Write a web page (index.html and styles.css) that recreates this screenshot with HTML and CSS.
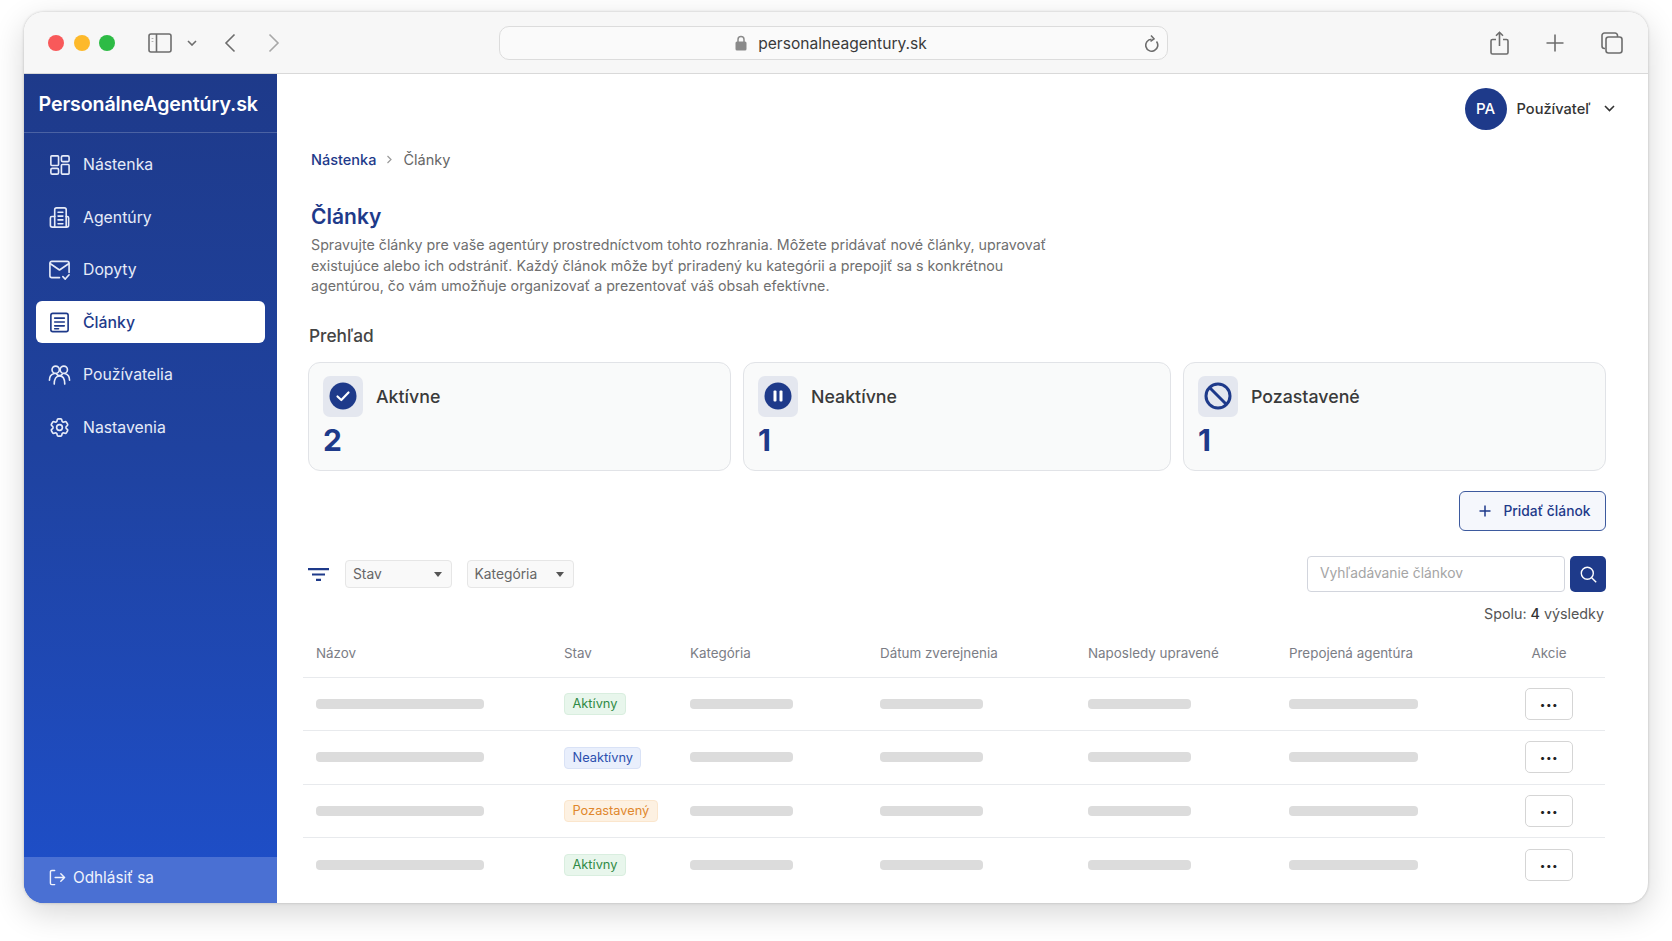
FILE: index.html
```html
<!DOCTYPE html>
<html lang="sk">
<head>
    <meta charset="UTF-8">
    <meta name="viewport" content="width=device-width, initial-scale=1.0">
    <title>Články</title>
    <link rel="stylesheet" href="styles.css">
</head>
<body>
<div class="window">

    <!-- browser toolbar -->
    <div class="toolbar">
        <div class="lights">
            <span class="light red"></span>
            <span class="light yellow"></span>
            <span class="light green"></span>
        </div>
        <svg class="tb-icon side-toggle" width="24" height="20" viewBox="0 0 24 20"><rect x="1" y="1" width="22" height="18" rx="2"/><path d="M8.5 1v18"/><path d="M4.500 5v.5M4.500 8v.5" stroke-width="1.800"/></svg>
        <svg class="tb-icon side-chevron" width="10" height="6" viewBox="0 0 10 6"><path d="M1 1l4 4 4-4"/></svg>
        <svg class="tb-icon back" width="12" height="20" viewBox="0 0 12 20"><path d="M10.500 1.500L2 10l8.500 8.500"/></svg>
        <svg class="tb-icon forward" width="12" height="20" viewBox="0 0 12 20"><path d="M1.500 1.500L10 10l-8.500 8.500"/></svg>
        <div class="urlbar">
            <div class="url">
                <svg width="12" height="16" viewBox="0 0 12 16"><path d="M3 7V4.500a3 3 0 0 1 6 0V7" fill="none" stroke="#8a8a8a" stroke-width="1.500"/><rect x="0.500" y="6.500" width="11" height="9" rx="1.500" fill="#8a8a8a"/></svg>
                <span>personalneagentury.sk</span>
            </div>
            <svg class="tb-icon reload" width="15" height="18" viewBox="0 0 15 18"><path d="M12.500 7.500A6 6 0 1 1 7.500 5.200"/><path d="M7 1.500l3 3.300-3.500 2.500"/></svg>
        </div>
        <div class="tb-right">
            <svg class="tb-icon" width="19" height="24" viewBox="0 0 19 24"><path d="M6 8.500H2.500a1.500 1.500 0 0 0-1.500 1.500v11.500A1.500 1.500 0 0 0 2.500 23h14a1.500 1.500 0 0 0 1.500-1.500V10a1.500 1.500 0 0 0-1.500-1.500H13"/><path d="M9.500 15V1.500M6 4.800l3.500-3.500L13 4.800"/></svg>
            <svg class="tb-icon" width="18" height="18" viewBox="0 0 18 18"><path d="M9 0.500v17M0.500 9h17"/></svg>
            <svg class="tb-icon" width="22" height="22" viewBox="0 0 22 22"><path d="M4 16.500H3.500A2.500 2.500 0 0 1 1 14V3.500A2.500 2.500 0 0 1 3.500 1H14a2.500 2.500 0 0 1 2.500 2.500V5"/><rect x="5" y="5" width="16" height="16" rx="2.500"/></svg>
        </div>
    </div>

    <div class="app">
        <!-- sidebar -->
        <aside class="sidebar">
            <div class="brand">PersonálneAgentúry.sk</div>
            <nav class="side-nav">
                <a class="nav-item" href="#">
                    <svg class="nav-icon" viewBox="0 0 24 24"><rect x="3" y="3" width="8" height="10" rx="1"/><rect x="14" y="3" width="8" height="6" rx="1.500"/><rect x="3" y="16" width="8" height="6" rx="1.500"/><rect x="14" y="12" width="8" height="10" rx="1"/></svg>
                    Nástenka
                </a>
                <a class="nav-item" href="#">
                    <svg class="nav-icon" viewBox="0 0 24 24"><path d="M7 22V4a2 2 0 0 1 2-2h8a2 2 0 0 1 2 2v18"/><path d="M7 11H4a1.500 1.500 0 0 0-1.500 1.500V20A2 2 0 0 0 4.500 22h15a2 2 0 0 0 2-2v-7.500A1.500 1.500 0 0 0 20 11h-1"/><path d="M10.500 6.500h5M10.500 10.500h5M10.500 14.500h5M10.500 18.500h5"/></svg>
                    Agentúry
                </a>
                <a class="nav-item" href="#">
                    <svg class="nav-icon" viewBox="0 0 24 24"><path d="M12 20.500H4a2 2 0 0 1-2-2v-13a2 2 0 0 1 2-2h16a2 2 0 0 1 2 2V15"/><path d="M2.500 6l9.500 6.500L21.500 6"/><path d="M15.500 19.500l2.500 2.500 4-4.500"/></svg>
                    Dopyty
                </a>
                <a class="nav-item active" href="#">
                    <svg class="nav-icon" viewBox="0 0 24 24"><rect x="3" y="2.500" width="18" height="19" rx="2"/><path d="M7 7.500h10M7 11.500h10M7 15.500h10M7 18.500h4"/></svg>
                    Články
                </a>
                <a class="nav-item" href="#">
                    <svg class="nav-icon" viewBox="0 0 24 24"><circle cx="8" cy="7" r="3.800"/><circle cx="16.500" cy="7" r="3.800"/><path d="M1.500 18c0-4 2.500-6.500 5-7M22.500 18c0-4-2.500-6.500-5-7"/><path d="M6.500 22c0-5 2-8.500 5.500-8.500s5.500 3.500 5.500 8.500"/><path d="M9 11.500a3.500 3.500 0 0 0 6 0"/></svg>
                    Používatelia
                </a>
                <a class="nav-item" href="#">
                    <svg class="nav-icon" viewBox="0 0 24 24"><path d="M9.594 3.940c.09-.542.56-.94 1.110-.94h2.593c.55 0 1.020.398 1.110.94l.213 1.281c.063.374.313.686.645.870.074.04.147.083.22.127.325.196.72.257 1.075.124l1.217-.456a1.125 1.125 0 0 1 1.370.49l1.296 2.247a1.125 1.125 0 0 1-.26 1.431l-1.003.827c-.293.241-.438.613-.43.992a7.723 7.723 0 0 1 0 .255c-.008.378.137.75.43.991l1.004.827c.424.35.534.955.26 1.430l-1.298 2.247a1.125 1.125 0 0 1-1.369.491l-1.217-.456c-.355-.133-.75-.072-1.076.124a6.470 6.470 0 0 1-.22.128c-.331.183-.581.495-.644.869l-.213 1.281c-.09.543-.56.94-1.110.94h-2.594c-.55 0-1.019-.398-1.110-.94l-.213-1.281c-.062-.374-.312-.686-.644-.870a6.520 6.520 0 0 1-.22-.127c-.325-.196-.72-.257-1.076-.124l-1.217.456a1.125 1.125 0 0 1-1.369-.49l-1.297-2.247a1.125 1.125 0 0 1 .26-1.431l1.004-.827c.292-.24.437-.613.43-.991a6.932 6.932 0 0 1 0-.255c.007-.38-.138-.751-.43-.992l-1.004-.827a1.125 1.125 0 0 1-.26-1.430l1.297-2.247a1.125 1.125 0 0 1 1.370-.491l1.216.456c.356.133.751.072 1.076-.124.072-.044.146-.086.22-.128.332-.183.582-.495.644-.869l.214-1.280Z"/><circle cx="12" cy="12" r="3"/></svg>
                    Nastavenia
                </a>
            </nav>
            <a class="logout" href="#">
                <svg class="logout-icon" viewBox="0 0 18 18"><path d="M6 1.500H3a1.500 1.500 0 0 0-1.500 1.500v12A1.500 1.500 0 0 0 3 16.500h3"/><path d="M6.500 9h10M12.500 5l4 4-4 4"/></svg>
                Odhlásiť sa
            </a>
        </aside>

        <!-- main content -->
        <main class="content">
            <div class="user-row">
                <span class="avatar">PA</span>
                <span class="user-name">Používateľ</span>
                <svg class="user-chevron" width="11" height="7" viewBox="0 0 11 7"><path d="M1 1l4.500 4.500L10 1"/></svg>
            </div>

            <div class="page-head">
                <div class="crumbs">
                    <a href="#">Nástenka</a>
                    <svg width="7" height="9" viewBox="0 0 7 9"><path d="M1.500 1l3.500 3.500L1.500 8"/></svg>
                    <span>Články</span>
                </div>
                <h1>Články</h1>
                <p>Spravujte články pre vaše agentúry prostredníctvom tohto rozhrania. Môžete pridávať nové články, upravovať<br>existujúce alebo ich odstrániť. Každý článok môže byť priradený ku kategórii a prepojiť sa s konkrétnou<br>agentúrou, čo vám umožňuje organizovať a prezentovať váš obsah efektívne.</p>
            </div>

            <h2>Prehľad</h2>
            <div class="stats">
                <div class="stat">
                    <div class="stat-top">
                        <span class="stat-icon">
                            <svg width="28" height="28" viewBox="0 0 28 28"><circle cx="14" cy="14" r="13.500" fill="#1e3a8a"/><path d="M8.500 14.500l3.800 3.500 7.200-7.500" fill="none" stroke="#fff" stroke-width="2.200" stroke-linecap="round" stroke-linejoin="round"/></svg>
                        </span>
                        <span class="stat-label">Aktívne</span>
                    </div>
                    <div class="stat-num">2</div>
                </div>
                <div class="stat">
                    <div class="stat-top">
                        <span class="stat-icon">
                            <svg width="28" height="28" viewBox="0 0 28 28"><circle cx="14" cy="14" r="13.500" fill="#1e3a8a"/><rect x="9.500" y="8.500" width="3" height="11" rx="1" fill="#fff"/><rect x="15.500" y="8.500" width="3" height="11" rx="1" fill="#fff"/></svg>
                        </span>
                        <span class="stat-label">Neaktívne</span>
                    </div>
                    <div class="stat-num">1</div>
                </div>
                <div class="stat">
                    <div class="stat-top">
                        <span class="stat-icon">
                            <svg width="28" height="28" viewBox="0 0 28 28" fill="none" stroke="#1e3a8a" stroke-width="3"><circle cx="14" cy="14" r="12"/><path d="M5.500 5.500l17 17"/></svg>
                        </span>
                        <span class="stat-label">Pozastavené</span>
                    </div>
                    <div class="stat-num">1</div>
                </div>
            </div>

            <div class="add-row">
                <button class="add-btn">
                    <svg width="12" height="12" viewBox="0 0 12 12"><path d="M6 0.500v11M0.500 6h11"/></svg>
                    Pridať článok
                </button>
            </div>

            <div class="filters">
                <svg class="filter-icon" width="21" height="13" viewBox="0 0 21 13"><path d="M0 1.200h21M4 6.500h13M8 11.800h5"/></svg>
                <div class="select stav">Stav<span class="caret"></span></div>
                <div class="select kategoria">Kategória<span class="caret"></span></div>
                <div class="search">
                    <div class="search-input">Vyhľadávanie článkov</div>
                    <button class="search-btn">
                        <svg width="17" height="17" viewBox="0 0 17 17"><circle cx="7.300" cy="7.300" r="6"/><path d="M11.700 11.700l4.500 4.500"/></svg>
                    </button>
                </div>
            </div>
            <div class="total">Spolu: <b>4</b> výsledky</div>

            <!-- articles table -->
            <div class="table">
                <div class="row head">
                    <span>Názov</span>
                    <span>Stav</span>
                    <span>Kategória</span>
                    <span>Dátum zverejnenia</span>
                    <span>Naposledy upravené</span>
                    <span>Prepojená agentúra</span>
                    <span class="center">Akcie</span>
                </div>
                <div class="row">
                    <i class="bar w-name"></i>
                    <span><em class="badge green">Aktívny</em></span>
                    <i class="bar w-cat"></i><i class="bar w-cat"></i><i class="bar w-cat"></i><i class="bar w-agency"></i>
                    <span class="center"><button class="more">•••</button></span>
                </div>
                <div class="row">
                    <i class="bar w-name"></i>
                    <span><em class="badge blue">Neaktívny</em></span>
                    <i class="bar w-cat"></i><i class="bar w-cat"></i><i class="bar w-cat"></i><i class="bar w-agency"></i>
                    <span class="center"><button class="more">•••</button></span>
                </div>
                <div class="row">
                    <i class="bar w-name"></i>
                    <span><em class="badge orange">Pozastavený</em></span>
                    <i class="bar w-cat"></i><i class="bar w-cat"></i><i class="bar w-cat"></i><i class="bar w-agency"></i>
                    <span class="center"><button class="more">•••</button></span>
                </div>
                <div class="row">
                    <i class="bar w-name"></i>
                    <span><em class="badge green">Aktívny</em></span>
                    <i class="bar w-cat"></i><i class="bar w-cat"></i><i class="bar w-cat"></i><i class="bar w-agency"></i>
                    <span class="center"><button class="more">•••</button></span>
                </div>
            </div>
        </main>
    </div>
</div>
</body>
</html>
```

FILE: styles.css
```css
* {
    box-sizing: border-box;
}

body {
    margin: 0;
    height: 941px;
    overflow: hidden;
    background-color: #fff;
    font-family: Inter, "Noto Sans", sans-serif;
    color: #333;
}

/* window frame */
.window {
    width: 1624px;
    height: 891px;
    margin: 12px 24px 0;
    border-radius: 20px;
    overflow: hidden;
    background-color: #fff;
    display: flex;
    flex-direction: column;
    box-shadow: 0 10px 32px rgba(0, 0, 0, 0.16), 0 0 3px rgba(0, 0, 0, 0.22);
}

/* browser toolbar */
.toolbar {
    height: 62px;
    padding-top: 1px;
    flex-shrink: 0;
    background-color: #f7f7f7;
    border-bottom: 1px solid #d9d9d9;
    display: flex;
    align-items: center;
}

.tb-icon {
    fill: none;
    stroke: #6d6d6d;
    stroke-width: 1.6;
    flex-shrink: 0;
}

.lights {
    display: flex;
    gap: 9.500px;
    margin-left: 24px;
}

.light {
    width: 16px;
    height: 16px;
    border-radius: 50%;
}

.red { background-color: #f8595a; }
.yellow { background-color: #fdb92b; }
.green { background-color: #2dbb45; }

.side-toggle { margin-left: 33px; }
.side-chevron { margin-left: 15px; }
.back { margin-left: 27px; }
.forward { margin-left: 32px; stroke: #a8a8a8; }

.urlbar {
    width: 669px;
    height: 34px;
    margin-left: 218.500px;
    border: 1px solid #dcdcdc;
    border-radius: 10px;
    background-color: #fafafa;
    display: flex;
    align-items: center;
    justify-content: space-between;
    position: relative;
    padding-right: 8px;
}

.url {
    flex: 1;
    display: flex;
    align-items: center;
    justify-content: center;
    gap: 11px;
    font-size: 15.600px;
    color: #3a3a3a;
    padding-left: 19px;
}

.tb-right {
    display: flex;
    align-items: center;
    gap: 37px;
    margin-left: 322px;
}

/* app layout */
.app {
    flex: 1;
    display: flex;
    min-height: 0;
}

.sidebar {
    width: 253px;
    flex-shrink: 0;
    background: linear-gradient(180deg, #1e3a8a 0%, #1f429f 45%, #1e4fca 100%);
    display: flex;
    flex-direction: column;
    color: #fff;
}

.brand {
    height: 59px;
    padding: 16px 0 0 14.500px;
    font-size: 19.600px;
    font-weight: 600;
    line-height: 28px;
    letter-spacing: -0.1px;
    border-bottom: 1px solid rgba(255, 255, 255, 0.2);
}

.side-nav {
    flex: 1;
    padding: 10.500px 12px 0;
    display: flex;
    flex-direction: column;
    gap: 10.500px;
}

.nav-item {
    height: 42px;
    padding-left: 12px;
    border-radius: 6px;
    display: flex;
    align-items: center;
    gap: 12px;
    color: #e6ebf8;
    font-size: 15.800px;
    text-decoration: none;
}

.nav-icon {
    width: 23px;
    height: 23px;
    fill: none;
    stroke: currentColor;
    stroke-width: 1.7;
    stroke-linecap: round;
    stroke-linejoin: round;
    flex-shrink: 0;
}

.nav-item.active {
    background-color: #fff;
    color: #1e3a8a;
    font-weight: 500;
}

.logout {
    height: 46px;
    padding: 0 0 6px 25px;
    background-color: #4a70d3;
    display: flex;
    align-items: center;
    gap: 7px;
    color: #f0f3fc;
    font-size: 15.300px;
    text-decoration: none;
}

.logout-icon {
    width: 17px;
    height: 17px;
    fill: none;
    stroke: currentColor;
    stroke-width: 1.5;
    stroke-linecap: round;
    stroke-linejoin: round;
}

/* main content */
.content {
    flex: 1;
    padding: 14px 42px 0 31px;
    min-width: 0;
}

.user-row {
    display: flex;
    align-items: center;
    justify-content: flex-end;
    height: 41px;
}

.avatar {
    width: 42px;
    height: 42px;
    border-radius: 50%;
    background-color: #1e3a8a;
    color: #fff;
    font-size: 15px;
    font-weight: 500;
    display: flex;
    align-items: center;
    justify-content: center;
}

.user-name {
    margin-left: 10px;
    font-size: 14.600px;
    font-weight: 500;
    color: #333;
}

.user-chevron {
    margin: 0 -9px 0 13.500px;
    fill: none;
    stroke: #333;
    stroke-width: 1.600;
}

.page-head {
    padding-left: 3px;
}

.crumbs {
    margin-top: 20px;
    height: 21px;
    display: flex;
    align-items: center;
    gap: 10px;
    font-size: 14.500px;
    color: #666;
}

.crumbs a {
    color: #1e3a8a;
    font-weight: 500;
    text-decoration: none;
}

.crumbs svg {
    fill: none;
    stroke: #9a9a9a;
    stroke-width: 1.200;
}

h1 {
    margin: 32px 0 0;
    font-size: 21px;
    line-height: 30px;
    font-weight: 600;
    color: #1e3a8a;
}

.page-head p {
    margin: 3px 0 0;
    font-size: 14.250px;
    line-height: 20.500px;
    color: #6f6f6f;
}

h2 {
    margin: 27px 0 0 1px;
    font-size: 17.300px;
    line-height: 24px;
    font-weight: 500;
    color: #444;
}

/* overview cards */
.stats {
    margin-top: 14px;
    display: grid;
    grid-template-columns: 423px 428px 423px;
    gap: 12px;
}

.stat {
    height: 109px;
    padding: 13px 14px 0;
    background-color: #f9fafa;
    border: 1px solid #e1e3e7;
    border-radius: 12px;
}

.stat-top {
    display: flex;
    align-items: center;
    gap: 13px;
}

.stat-icon {
    width: 40px;
    height: 41px;
    border-radius: 7px;
    background-color: #e4e7ef;
    display: flex;
    align-items: center;
    justify-content: center;
}

.stat-label {
    font-size: 17.800px;
    font-weight: 500;
    color: #3a3a3a;
}

.stat-num {
    margin-top: 3px;
    font-size: 30px;
    line-height: 40px;
    font-weight: 700;
    color: #1e3a8a;
}

.add-row {
    margin-top: 20px;
    display: flex;
    justify-content: flex-end;
}

.add-btn {
    width: 147px;
    height: 40px;
    border: 1.500px solid #3d5a9e;
    border-radius: 6px;
    background-color: #f5f7fc;
    color: #1e3a8a;
    font-family: inherit;
    font-size: 13.800px;
    font-weight: 500;
    display: flex;
    align-items: center;
    justify-content: center;
    gap: 13px;
    padding-left: 10px;
}

.add-btn svg {
    fill: none;
    stroke: #1e3a8a;
    stroke-width: 1.500;
}

/* filters and search */
.filters {
    margin-top: 26px;
    height: 35px;
    display: flex;
    align-items: center;
}

.filter-icon {
    fill: none;
    stroke: #1e3a8a;
    stroke-width: 2.200;
    margin: 0 16px 0 0;
}

.select {
    height: 28px;
    padding-left: 7px;
    border: 1px solid #e6e6e6;
    border-radius: 4px;
    background-color: #f9f9f9;
    font-size: 13.800px;
    color: #666;
    display: flex;
    align-items: center;
    justify-content: space-between;
    padding-right: 9px;
}

.stav { width: 107px; margin-right: 14.500px; }
.kategoria { width: 107px; }

.caret {
    width: 0;
    height: 0;
    border-left: 4px solid transparent;
    border-right: 4px solid transparent;
    border-top: 5px solid #555;
}

.search {
    margin-left: auto;
    display: flex;
    gap: 5px;
}

.search-input {
    width: 258px;
    height: 36px;
    padding-left: 12px;
    border: 1.500px solid #d2d5dd;
    border-radius: 4px;
    background-color: #fff;
    font-size: 13.800px;
    line-height: 33px;
    color: #a5a5a5;
}

.search-btn {
    width: 36px;
    height: 36px;
    padding: 0;
    border: none;
    border-radius: 5px;
    background-color: #1e3a8a;
    display: flex;
    align-items: center;
    justify-content: center;
}

.search-btn svg {
    fill: none;
    stroke: #fff;
    stroke-width: 1.400;
}

.total {
    margin-top: 12px;
    height: 20px;
    padding-right: 2px;
    text-align: right;
    font-size: 14.300px;
    line-height: 20px;
    color: #555;
}

.total b {
    font-weight: 500;
    color: #333;
}

/* table */
.table {
    margin: 9px 1px 0 -5.500px;
}

.row {
    height: 53.500px;
    padding-left: 13.500px;
    border-bottom: 1px solid #e8eaed;
    display: grid;
    grid-template-columns: 248px 126px 190px 208px 201px 236px 48px;
    align-items: center;
}

.row.head {
    height: 45px;
    padding-bottom: 4px;
    font-size: 13.400px;
    color: #7b7d85;
}

.row:last-child {
    border-bottom: none;
}

.center {
    text-align: center;
}

.bar {
    display: block;
    height: 10px;
    border-radius: 4px;
    background-color: #dcdcdc;
}

.w-name { width: 168px; }
.w-cat { width: 103px; }
.w-agency { width: 129px; }

.badge {
    display: inline-block;
    height: 22px;
    padding: 0 7.500px;
    border: 1px solid;
    border-radius: 4px;
    font-size: 12.800px;
    line-height: 20px;
    font-style: normal;
}

.badge.green { background-color: #e8f6ec; border-color: #d9eedf; color: #2f8a45; }
.badge.blue { background-color: #e9effc; border-color: #d9e2f6; color: #2b4fae; }
.badge.orange { background-color: #fdf1e2; border-color: #fbe6cd; color: #e0872c; }

.more {
    display: block;
    width: 48px;
    height: 32px;
    padding: 0;
    border: 1.500px solid #d5d5d5;
    border-radius: 5px;
    background-color: #fff;
    font-family: inherit;
    font-size: 10px;
    letter-spacing: 0.5px;
    color: #222;
}
```
